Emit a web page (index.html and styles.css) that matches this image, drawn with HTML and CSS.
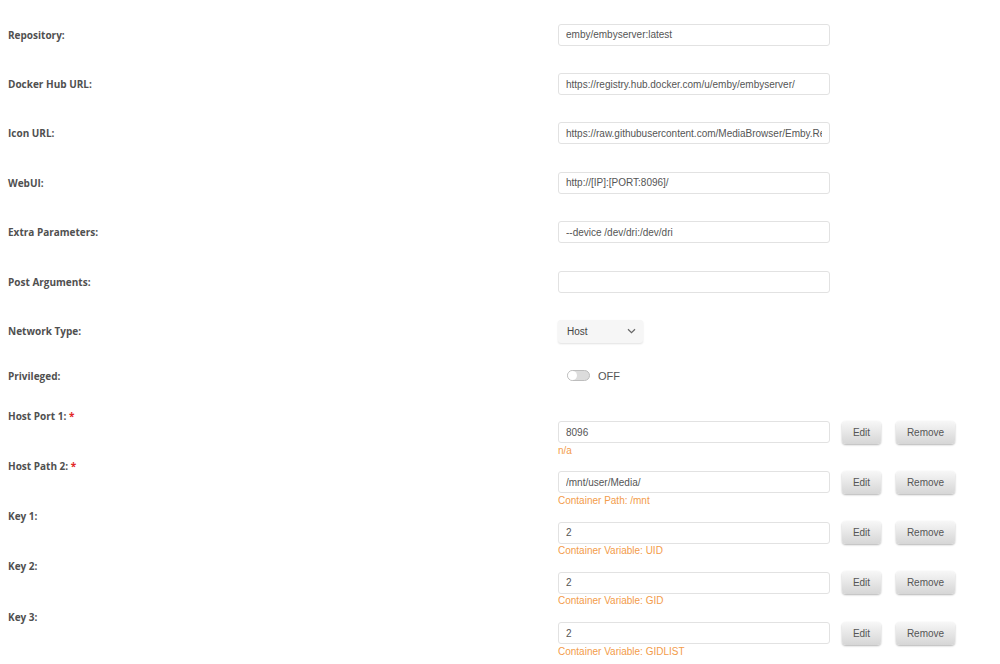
FILE: index.html
```html
<!DOCTYPE html>
<html lang="en">
<head>
    <meta charset="UTF-8">
    <meta name="viewport" content="width=device-width, initial-scale=1.0">
    <title>Update Container</title>
    <link rel="stylesheet" href="styles.css">
</head>
<body>
    <div class="form">
        <div class="row">
            <div class="label">Repository:</div>
            <div class="field"><input class="text" type="text" value="emby/embyserver:latest"></div>
        </div>
        <div class="row">
            <div class="label">Docker Hub URL:</div>
            <div class="field"><input class="text" type="text" value="https://registry.hub.docker.com/u/emby/embyserver/"></div>
        </div>
        <div class="row">
            <div class="label">Icon URL:</div>
            <div class="field"><input class="text" type="text" value="https://raw.githubusercontent.com/MediaBrowser/Emby.Resources/master/images/Logos/logoicon.png"></div>
        </div>
        <div class="row">
            <div class="label">WebUI:</div>
            <div class="field"><input class="text" type="text" value="http://[IP]:[PORT:8096]/"></div>
        </div>
        <div class="row">
            <div class="label">Extra Parameters:</div>
            <div class="field"><input class="text" type="text" value="--device /dev/dri:/dev/dri"></div>
        </div>
        <div class="row">
            <div class="label">Post Arguments:</div>
            <div class="field"><input class="text" type="text" value=""></div>
        </div>
        <div class="row">
            <div class="label">Network Type:</div>
            <div class="field">
                <div class="select">
                    <span>Host</span>
                    <svg width="9" height="6" viewBox="0 0 9 6"><path d="M1 1.2 L4.5 4.6 L8 1.2" fill="none" stroke="#666" stroke-width="1.2"/></svg>
                </div>
            </div>
        </div>
        <div class="row privileged">
            <div class="label">Privileged:</div>
            <div class="field">
                <span class="switch"><span class="knob"></span></span>
                <span class="switch-text">OFF</span>
            </div>
        </div>

        <!-- ports, paths and variables -->
        <div class="row config">
            <div class="label">Host Port 1: <span class="req">*</span></div>
            <div class="field">
                <div class="line">
                    <input class="text" type="text" value="8096">
                    <button class="btn edit">Edit</button>
                    <button class="btn remove">Remove</button>
                </div>
                <div class="hint">n/a</div>
            </div>
        </div>
        <div class="row config">
            <div class="label">Host Path 2: <span class="req">*</span></div>
            <div class="field">
                <div class="line">
                    <input class="text" type="text" value="/mnt/user/Media/">
                    <button class="btn edit">Edit</button>
                    <button class="btn remove">Remove</button>
                </div>
                <div class="hint">Container Path: /mnt</div>
            </div>
        </div>
        <div class="row config">
            <div class="label">Key 1:</div>
            <div class="field">
                <div class="line">
                    <input class="text" type="text" value="2">
                    <button class="btn edit">Edit</button>
                    <button class="btn remove">Remove</button>
                </div>
                <div class="hint">Container Variable: UID</div>
            </div>
        </div>
        <div class="row config">
            <div class="label">Key 2:</div>
            <div class="field">
                <div class="line">
                    <input class="text" type="text" value="2">
                    <button class="btn edit">Edit</button>
                    <button class="btn remove">Remove</button>
                </div>
                <div class="hint">Container Variable: GID</div>
            </div>
        </div>
        <div class="row config">
            <div class="label">Key 3:</div>
            <div class="field">
                <div class="line">
                    <input class="text" type="text" value="2">
                    <button class="btn edit">Edit</button>
                    <button class="btn remove">Remove</button>
                </div>
                <div class="hint">Container Variable: GIDLIST</div>
            </div>
        </div>
    </div>
</body>
</html>
```

FILE: styles.css
```css
/* Container settings form */
body {
    margin: 0;
    padding: 0;
    background: #fff;
    font-family: "Liberation Sans", Arial, sans-serif;
    color: #555;
}

.form {
    padding: 10px 8px 0 8px;
}

.row {
    display: grid;
    grid-template-columns: 550px 1fr;
    align-items: center;
    height: 49.4px;
}

.label {
    font-family: "Open Sans", sans-serif;
    font-weight: 700;
    font-size: 10px;
    line-height: 12px;
    color: #505050;
}

.req {
    color: #e22828;
}

input.text {
    box-sizing: border-box;
    width: 272px;
    height: 22px;
    margin: 0;
    padding: 0 7px;
    border: 1px solid #e2e2e2;
    border-radius: 3px;
    background: #fff;
    font-family: "Liberation Sans", Arial, sans-serif;
    font-size: 10px;
    color: #555;
    outline: none;
}

/* dropdown */
.select {
    box-sizing: border-box;
    width: 85px;
    height: 23px;
    padding: 0 7px 0 9px;
    display: flex;
    align-items: center;
    justify-content: space-between;
    background: #f6f6f6;
    border-radius: 3px;
    box-shadow: 0 1px 2px rgba(0, 0, 0, 0.12);
    font-size: 10px;
    color: #444;
}

/* on/off switch */
.privileged {
    height: 40px;
    margin-bottom: 14px;
}

.privileged .field {
    display: flex;
    align-items: center;
    padding-left: 9px;
}

.switch {
    box-sizing: border-box;
    width: 23px;
    height: 11px;
    border: 1px solid #bdbdbd;
    border-radius: 6px;
    background: #dcdcdc;
    display: inline-block;
    position: relative;
}

.knob {
    position: absolute;
    left: 0;
    top: 0;
    width: 9px;
    height: 9px;
    border-radius: 50%;
    background: #fff;
}

.switch-text {
    margin-left: 8px;
    font-size: 11px;
    color: #555;
}

/* port / path / variable rows */
.config {
    align-items: start;
    height: 50.25px;
}

.config .field {
    padding-top: 11px;
}

.line {
    display: flex;
    align-items: center;
}

.btn {
    box-sizing: border-box;
    height: 23px;
    border: none;
    border-radius: 4px;
    background: linear-gradient(#f7f7f7, #d6d6d6);
    box-shadow: 0 1px 2px rgba(0, 0, 0, 0.3);
    font-family: "Liberation Sans", Arial, sans-serif;
    font-size: 10px;
    color: #555;
    padding: 0;
}

.edit {
    width: 39px;
    margin-left: 12px;
}

.remove {
    width: 59px;
    margin-left: 15px;
}

.hint {
    font-size: 10px;
    line-height: 13px;
    color: #f39c4a;
}
```
